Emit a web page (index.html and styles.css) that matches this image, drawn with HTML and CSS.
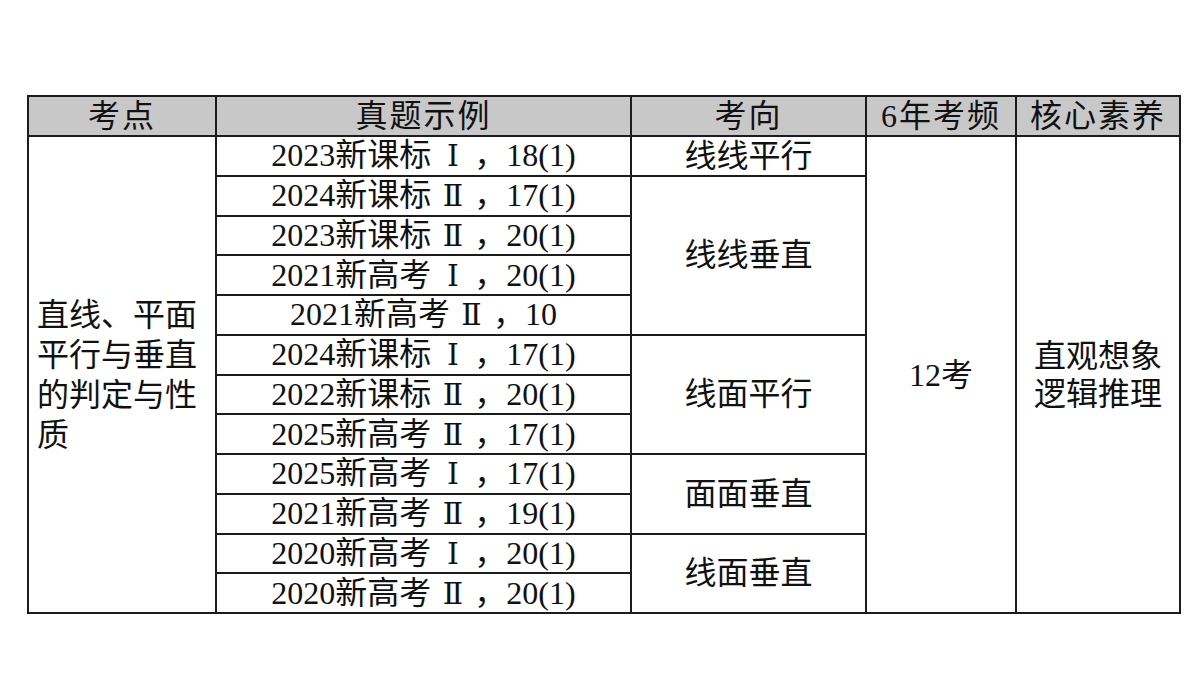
FILE: index.html
```html
<!DOCTYPE html>
<html lang="zh-CN">
<head>
<meta charset="utf-8">
<link rel="stylesheet" href="styles.css">
</head>
<body>
<div class="page">
<table class="grid">
<colgroup>
<col class="c1"><col class="c2"><col class="c3"><col class="c4"><col class="c5">
</colgroup>
<thead>
<tr><th>考点</th><th>真题示例</th><th>考向</th><th>6年考频</th><th>核心素养</th></tr>
</thead>
<tbody>
<tr>
<td rowspan="12" class="topic">直线、平面平行与垂直的判定与性质</td>
<td>2023新课标<span class="rn">Ⅰ</span>，18(1)</td>
<td>线线平行</td>
<td rowspan="12">12考</td>
<td rowspan="12" class="skill">直观想象<br>逻辑推理</td>
</tr>
<tr><td>2024新课标<span class="rn">Ⅱ</span>，17(1)</td><td rowspan="4">线线垂直</td></tr>
<tr><td>2023新课标<span class="rn">Ⅱ</span>，20(1)</td></tr>
<tr><td>2021新高考<span class="rn">Ⅰ</span>，20(1)</td></tr>
<tr><td>2021新高考<span class="rn">Ⅱ</span>，10</td></tr>
<tr><td>2024新课标<span class="rn">Ⅰ</span>，17(1)</td><td rowspan="3">线面平行</td></tr>
<tr><td>2022新课标<span class="rn">Ⅱ</span>，20(1)</td></tr>
<tr><td>2025新高考<span class="rn">Ⅱ</span>，17(1)</td></tr>
<tr><td>2025新高考<span class="rn">Ⅰ</span>，17(1)</td><td rowspan="2">面面垂直</td></tr>
<tr><td>2021新高考<span class="rn">Ⅱ</span>，19(1)</td></tr>
<tr><td>2020新高考<span class="rn">Ⅰ</span>，20(1)</td><td rowspan="2">线面垂直</td></tr>
<tr><td>2020新高考<span class="rn">Ⅱ</span>，20(1)</td></tr>
</tbody>
</table>
</div>
</body>
</html>
```

FILE: styles.css
```css
html, body {
  margin: 0;
  padding: 0;
  background: #ffffff;
}
.page {
  width: 1200px;
  height: 675px;
  padding: 95px 0 0 27px;
  box-sizing: border-box;
}
.grid {
  border-collapse: collapse;
  table-layout: fixed;
  width: 1152px;
  font-family: "Liberation Serif", "Noto Sans CJK SC", serif;
  font-size: 32px;
  color: #111111;
}
.c1 { width: 188px; }
.c2 { width: 415px; }
.c3 { width: 235px; }
.c4 { width: 150px; }
.c5 { width: 164px; }
.grid th,
.grid td {
  border: 2px solid #1c1c1c;
  padding: 0;
  text-align: center;
  vertical-align: middle;
  line-height: 36px;
  white-space: nowrap;
  font-weight: normal;
}
.grid thead tr { height: 40px; }
.grid tbody tr { height: 39.75px; }
.grid th {
  background: #c8c8c8;
  letter-spacing: 2px;
}
.grid td.topic {
  text-align: left;
  white-space: normal;
  padding: 0 6px 0 8px;
  line-height: 40px;
}
.grid td.skill {
  line-height: 38px;
}
.rn {
  display: inline-block;
  width: 43px;
  text-align: center;
  font-family: "DejaVu Serif", "Liberation Serif", "Noto Sans CJK SC", serif;
  font-size: 30px;
}
```
